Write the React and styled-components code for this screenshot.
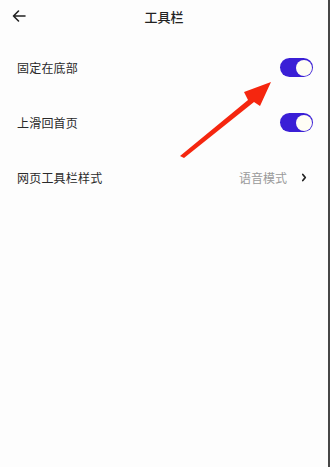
import React, { Component } from "react";
import styled, { createGlobalStyle } from "styled-components";

const GlobalStyle = createGlobalStyle`
  html, body {
    margin: 0;
    padding: 0;
    background: #fdfdfd;
  }
  body {
    font-family: "Noto Sans CJK SC", "Noto Sans", sans-serif;
  }
`;

const Page = styled.div`
  position: relative;
  width: 328px;
  height: 467px;
  background: #fdfdfd;
  border-right: 2px solid #474747;
  overflow: hidden;
`;

const Header = styled.div`
  height: 32px;
  display: flex;
  align-items: center;
  justify-content: center;
  position: relative;
`;

const BackButton = styled.div`
  position: absolute;
  left: 11px;
  top: 8px;
  width: 16px;
  height: 16px;
  display: flex;
`;

const Title = styled.div`
  font-size: 13px;
  font-weight: 500;
  color: #222;
`;

const List = styled.div`
  display: flex;
  flex-direction: column;
  padding-top: 8px;
`;

const Row = styled.div`
  height: 55px;
  display: flex;
  align-items: center;
  justify-content: space-between;
  padding: 0 15px 0 17px;
`;

const Label = styled.div`
  font-size: 12px;
  color: #2a2a2a;
  letter-spacing: 0.2px;
`;

const Side = styled.div`
  display: flex;
  align-items: center;
  gap: 14px;
  padding-right: 6px;
`;

const Value = styled.div`
  font-size: 12px;
  color: #9a9a9a;
`;

const Toggle = styled.div`
  width: 33px;
  height: 19px;
  border-radius: 10px;
  background: ${p => (p.on ? "#3a1fd6" : "#ccc")};
  display: flex;
  align-items: center;
  justify-content: ${p => (p.on ? "flex-end" : "flex-start")};
  padding: 0 1.5px;
  box-sizing: border-box;
`;

const Knob = styled.div`
  width: 16px;
  height: 16px;
  border-radius: 50%;
  background: #fffdf5;
`;

const Arrow = styled.svg`
  position: absolute;
  left: 176px;
  top: 78px;
`;

class App extends Component {
  render() {
    return (
      <Page>
        <GlobalStyle />
        <Header>
          <BackButton>
            <svg width="16" height="16" viewBox="0 0 16 16" fill="none">
              <path d="M14 8H2.5M7.5 3L2.5 8l5 5" stroke="#222" strokeWidth="1.6" strokeLinecap="round" strokeLinejoin="round" />
            </svg>
          </BackButton>
          <Title>工具栏</Title>
        </Header>
        <List>
          <Row>
            <Label>固定在底部</Label>
            <Toggle on>
              <Knob />
            </Toggle>
          </Row>
          <Row>
            <Label>上滑回首页</Label>
            <Toggle on>
              <Knob />
            </Toggle>
          </Row>
          <Row>
            <Label>网页工具栏样式</Label>
            <Side>
              <Value>语音模式</Value>
              <svg width="6" height="9" viewBox="0 0 6 9">
                <path d="M1.8 1.5l2.5 3-2.5 3" stroke="#222" strokeWidth="1.7" fill="none" strokeLinecap="round" strokeLinejoin="round" />
              </svg>
            </Side>
          </Row>
        </List>
        <Arrow width="104" height="82" viewBox="0 0 104 82">
          <path d="M4 78 L72 22 L68 14 L95 4 L84 28 L78 24 L8 80 Z" fill="#f5260f" strokeLinejoin="round" />
        </Arrow>
      </Page>
    );
  }
}

export default App;
